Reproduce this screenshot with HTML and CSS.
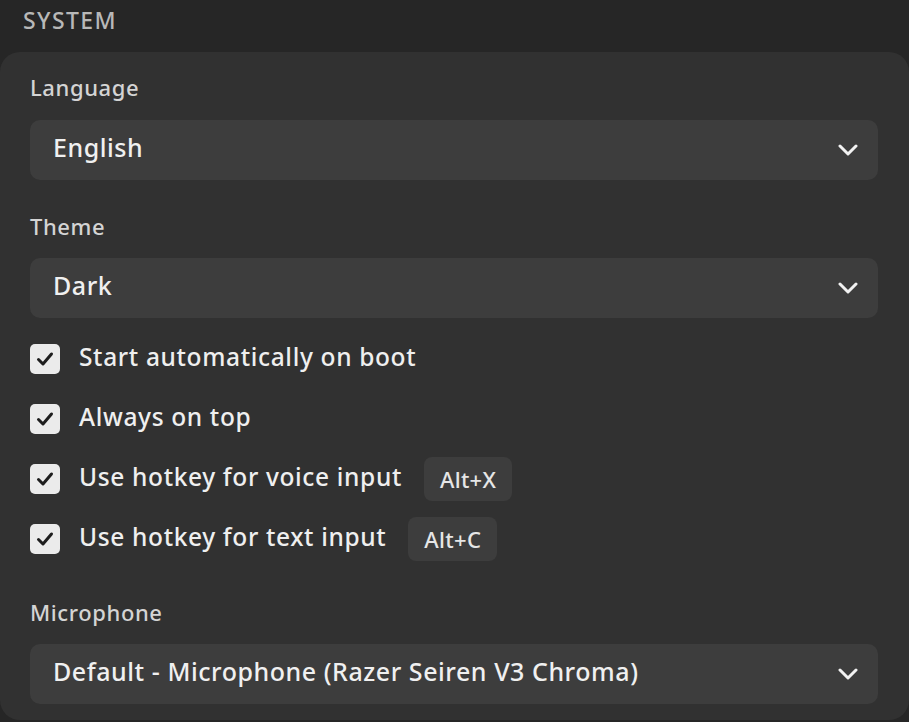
FILE: index.html
```html
<!DOCTYPE html>
<html lang="en">
<head>
<meta charset="utf-8">
<title>System settings</title>
<link rel="stylesheet" href="styles.css">
</head>
<body>
<div class="page">
  <div class="section-title">SYSTEM</div>
  <div class="card">
    <div class="field first">
      <div class="label">Language</div>
      <div class="select">
        <span class="value">English</span>
        <svg class="chev" width="20" height="12" viewBox="0 0 20 12"><path d="M2 2 L10 10 L18 2" fill="none" stroke="#f2f2f2" stroke-width="3" stroke-linecap="round" stroke-linejoin="round"/></svg>
      </div>
    </div>
    <div class="field">
      <div class="label">Theme</div>
      <div class="select">
        <span class="value">Dark</span>
        <svg class="chev" width="20" height="12" viewBox="0 0 20 12"><path d="M2 2 L10 10 L18 2" fill="none" stroke="#f2f2f2" stroke-width="3" stroke-linecap="round" stroke-linejoin="round"/></svg>
      </div>
    </div>
    <div class="checks">
      <div class="check-row">
        <span class="box"><svg width="30" height="30" viewBox="0 0 30 30"><path d="M8.5 15.5 L13 20 L21.5 10" fill="none" stroke="#1e1e1e" stroke-width="3" stroke-linecap="round" stroke-linejoin="round"/></svg></span>
        <span class="check-text">Start automatically on boot</span>
      </div>
      <div class="check-row">
        <span class="box"><svg width="30" height="30" viewBox="0 0 30 30"><path d="M8.5 15.5 L13 20 L21.5 10" fill="none" stroke="#1e1e1e" stroke-width="3" stroke-linecap="round" stroke-linejoin="round"/></svg></span>
        <span class="check-text">Always on top</span>
      </div>
      <div class="check-row">
        <span class="box"><svg width="30" height="30" viewBox="0 0 30 30"><path d="M8.5 15.5 L13 20 L21.5 10" fill="none" stroke="#1e1e1e" stroke-width="3" stroke-linecap="round" stroke-linejoin="round"/></svg></span>
        <span class="check-text">Use hotkey for voice input</span>
        <span class="kbd">Alt+X</span>
      </div>
      <div class="check-row">
        <span class="box"><svg width="30" height="30" viewBox="0 0 30 30"><path d="M8.5 15.5 L13 20 L21.5 10" fill="none" stroke="#1e1e1e" stroke-width="3" stroke-linecap="round" stroke-linejoin="round"/></svg></span>
        <span class="check-text">Use hotkey for text input</span>
        <span class="kbd">Alt+C</span>
      </div>
    </div>
    <div class="field mic">
      <div class="label">Microphone</div>
      <div class="select">
        <span class="value">Default - Microphone (Razer Seiren V3 Chroma)</span>
        <svg class="chev" width="20" height="12" viewBox="0 0 20 12"><path d="M2 2 L10 10 L18 2" fill="none" stroke="#f2f2f2" stroke-width="3" stroke-linecap="round" stroke-linejoin="round"/></svg>
      </div>
    </div>
  </div>
</div>
</body>
</html>
```

FILE: styles.css
```css
html, body {
  margin: 0;
  padding: 0;
  background: #262626;
}
body {
  font-family: "Noto Sans", "Open Sans", sans-serif;
  font-weight: 500;
  color: #eeeeee;
  width: 909px;
  height: 722px;
  overflow: hidden;
}
.page {
  display: flex;
  flex-direction: column;
}
.section-title {
  height: 52px;
  box-sizing: border-box;
  padding: 0 0 0 23px;
  font-size: 23px;
  line-height: 40px;
  color: #b8b8b8;
  letter-spacing: 1.4px;
}
.card {
  background: #313131;
  border-radius: 20px;
  padding: 19px 31px 16px 30px;
  display: flex;
  flex-direction: column;
}
.field {
  display: flex;
  flex-direction: column;
  margin-top: 30px;
}
.field.first {
  margin-top: 0;
}
.field.mic {
  margin-top: 35px;
}
.label {
  height: 32px;
  line-height: 32px;
  font-size: 22px;
  letter-spacing: 0.6px;
  color: #d4d4d4;
  margin-bottom: 17px;
}
.field .label {
  margin-bottom: 16px;
}
.field.first .label {
  margin-bottom: 17px;
}
.select {
  height: 60px;
  box-sizing: border-box;
  background: #3d3d3d;
  border-radius: 10px;
  display: flex;
  align-items: center;
  justify-content: space-between;
  padding: 0 20px 0 23px;
}
.value {
  font-size: 25px;
  letter-spacing: 0.55px;
  color: #f0f0f0;
  padding-bottom: 7px;
}
.chev {
  display: block;
}
.checks {
  display: flex;
  flex-direction: column;
  gap: 16px;
  margin-top: 19px;
}
.check-row {
  height: 44px;
  display: flex;
  align-items: center;
}
.box {
  width: 30px;
  height: 30px;
  border-radius: 5px;
  background: #ebebeb;
  display: flex;
  align-items: center;
  justify-content: center;
  margin-right: 19px;
}
.box svg {
  display: block;
}
.check-text {
  font-size: 24.5px;
  letter-spacing: 0.65px;
  color: #efefef;
  padding-bottom: 6px;
}
.kbd {
  margin-left: 22px;
  height: 44px;
  line-height: 44px;
  padding: 0 16px;
  background: #3d3d3d;
  border-radius: 8px;
  font-size: 22px;
  letter-spacing: 0.3px;
  color: #e6e6e6;
}
```
